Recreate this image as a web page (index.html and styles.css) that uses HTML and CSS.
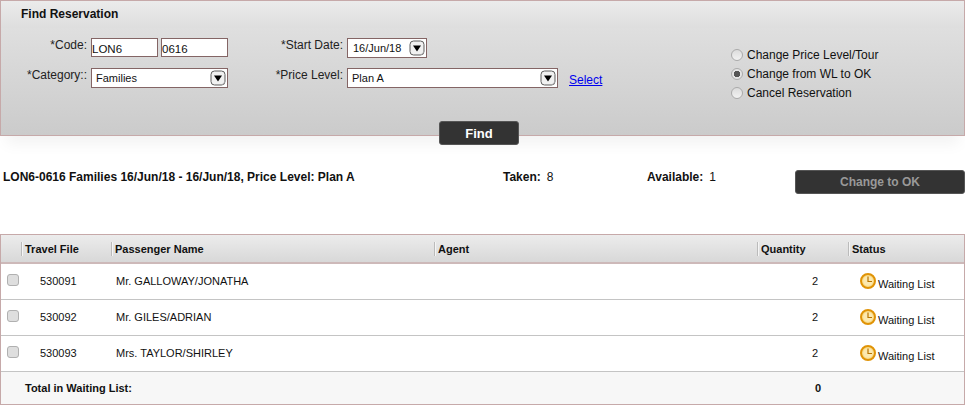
FILE: index.html
```html
<!DOCTYPE html>
<html lang="en">
<head>
<meta charset="utf-8">
<title>Find Reservation</title>
<link rel="stylesheet" href="styles.css">
</head>
<body>
<svg class="defs" width="0" height="0" aria-hidden="true">
  <symbol id="arrow" viewBox="0 0 16 16">
    <rect x="1" y="1" width="14" height="14" rx="3.5" fill="#f1f1f1" stroke="#5e5e5e"/>
    <path d="M14.5 5v7a2.500 2.500 0 0 1-2.500 2.500H5" fill="none" stroke="#a5a5a5"/>
    <path d="M4 5.500h8L8 11.500z" fill="#000"/>
  </symbol>
  <symbol id="clock" viewBox="0 0 16 16">
    <circle cx="8" cy="8" r="7" fill="#f9dc8a" stroke="#e09306" stroke-width="2"/>
    <circle cx="8" cy="8" r="4.800" fill="#fce9b0"/>
    <path d="M8 3.500V8.500H12" fill="none" stroke="#b87400" stroke-width="1.200"/>
  </symbol>
</svg>
<form class="panel">
  <h1 class="panel-title">Find Reservation</h1>
  <div class="panel-body">
    <div class="fields">
      <label class="lbl">*Code:</label>
      <div class="code-pair"><input class="inp" value="LON6"><input class="inp" value="0616"></div>
      <label class="lbl">*Start Date:</label>
      <div class="sel sel-date"><select><option>16/Jun/18</option></select><svg><use href="#arrow"/></svg></div>
      <span></span>
      <label class="lbl">*Category::</label>
      <div class="sel sel-cat"><select><option>Families</option></select><svg><use href="#arrow"/></svg></div>
      <label class="lbl">*Price Level:</label>
      <div class="sel sel-price"><select><option>Plan A</option></select><svg><use href="#arrow"/></svg></div>
      <a class="select-link" href="#">Select</a>
    </div>
    <div class="radios">
      <label class="radio"><input type="radio" name="action">Change Price Level/Tour</label>
      <label class="radio"><input type="radio" name="action" checked>Change from WL to OK</label>
      <label class="radio"><input type="radio" name="action">Cancel Reservation</label>
    </div>
  </div>
  <div class="panel-foot"><button type="button" class="btn btn-find">Find</button></div>
</form>
<section class="summary">
  <strong class="sum-title">LON6-0616 Families 16/Jun/18 - 16/Jun/18, Price Level: Plan A</strong>
  <span class="sum-taken"><b>Taken:</b>8</span>
  <span class="sum-avail"><b>Available:</b>1</span>
  <button type="button" class="btn btn-ok">Change to OK</button>
</section>
<table class="grid">
  <colgroup><col class="c1"><col class="c2"><col class="c3"><col class="c4"><col class="c5"><col class="c6"></colgroup>
  <thead>
    <tr><th></th><th><span>Travel File</span></th><th><span>Passenger Name</span></th><th><span>Agent</span></th><th><span>Quantity</span></th><th><span>Status</span></th></tr>
  </thead>
  <tbody>
    <tr><td class="chk"><input type="checkbox"></td><td class="file">530091</td><td class="name">Mr. GALLOWAY/JONATHA</td><td></td><td class="qty">2</td><td class="status"><svg><use href="#clock"/></svg><span>Waiting List</span></td></tr>
    <tr><td class="chk"><input type="checkbox"></td><td class="file">530092</td><td class="name">Mr. GILES/ADRIAN</td><td></td><td class="qty">2</td><td class="status"><svg><use href="#clock"/></svg><span>Waiting List</span></td></tr>
    <tr><td class="chk"><input type="checkbox"></td><td class="file">530093</td><td class="name">Mrs. TAYLOR/SHIRLEY</td><td></td><td class="qty">2</td><td class="status"><svg><use href="#clock"/></svg><span>Waiting List</span></td></tr>
  </tbody>
  <tfoot>
    <tr><td></td><td colspan="3" class="total-label">Total in Waiting List:</td><td class="qty total">0</td><td></td></tr>
  </tfoot>
</table>
</body>
</html>
```

FILE: styles.css
```css
* { box-sizing: border-box; }
html, body { margin: 0; padding: 0; }
body { width: 965px; height: 405px; overflow: hidden; background: #fff; font: 12px "Liberation Sans", Arial, sans-serif; color: #111; }
.defs { display: block; height: 0; }

.panel { height: 136px; border: 1px solid #c6a9a9; background: linear-gradient(#e4e4e4, #cbcbcb); box-shadow: 0 14px 14px -6px rgba(0,0,0,.05); display: flex; flex-direction: column; }
.panel-title { margin: 0; height: 27px; padding: 6px 0 0 20px; font-size: 12px; line-height: 14px; font-weight: bold; color: #111; background: linear-gradient(#ebebeb, #dedede); }
.panel-body { flex: 1; display: flex; justify-content: space-between; }
.fields { display: grid; grid-template-columns: 86px 137px 111px auto auto; grid-template-rows: 20px 20px; column-gap: 4px; row-gap: 10px; padding-top: 10px; align-items: start; align-content: start; }
.lbl { font-size: 12px; line-height: 14px; color: #222; text-align: right; }
.code-pair { display: flex; gap: 3px; }
.inp { width: 67px; height: 19px; border: 1px solid #846565; background: #fff; padding: 3px 0 0 0; font: 11.500px "Liberation Sans", Arial, sans-serif; color: #111; border-radius: 0; outline: 0; }
.sel { display: grid; align-items: center; height: 20px; border: 1px solid #846565; background: #fff; }
.sel select, .sel svg { grid-area: 1 / 1; }
.sel select { appearance: none; border: 0; background: transparent; font: 11px "Liberation Sans", Arial, sans-serif; color: #111; padding: 0 0 0 4px; width: 100%; height: 18px; outline: 0; }
.sel svg { width: 16px; height: 16px; justify-self: end; margin-right: 1px; }
.sel-cat { width: 137px; }
.sel-date { width: 80px; }
.sel-date select { padding-left: 5px; }
.sel-price { width: 211px; }
.select-link { color: #00e; font-size: 12px; line-height: 14px; margin: 5px 0 0 7px; text-decoration: underline; }
.radios { display: flex; flex-direction: column; gap: 5px; padding-top: 20px; width: 233px; }
.radio { display: flex; align-items: center; gap: 4px; height: 14px; line-height: 14px; color: #111; white-space: nowrap; }
.radio input { appearance: none; width: 12px; height: 12px; margin: 0; border-radius: 50%; border: 1px solid #aaa; background: linear-gradient(#dcdcdc, #f2f2f2); }
.radio input:checked { background: radial-gradient(circle, #555 0 3px, #e4e4e4 3.500px); }

.panel-foot { display: flex; justify-content: center; height: 0; padding-right: 7px; }
.btn { border: 1px solid #555; border-radius: 3px; background: #333; font: bold 12px "Liberation Sans", Arial, sans-serif; padding: 0; }
.btn-find { width: 80px; height: 24px; margin-top: -14px; color: #fff; font-size: 13px; flex: none; }

.summary { height: 98px; padding-left: 3px; display: flex; align-items: flex-start; }
.sum-title, .sum-taken, .sum-avail { margin-top: 34px; line-height: 14px; color: #111; }
.sum-title { width: 500px; font-weight: bold; }
.sum-taken { width: 144px; }
.sum-avail { width: 148px; }
.sum-taken b, .sum-avail b { margin-right: 6px; }
.btn-ok { width: 170px; height: 24px; margin-top: 34px; color: #999; }

.grid { width: 965px; height: 171px; table-layout: fixed; border-collapse: separate; border-spacing: 0; border: 1px solid #c6a9a9; }
.c1 { width: 20px; } .c2 { width: 90px; } .c3 { width: 323px; } .c4 { width: 323px; } .c5 { width: 91px; }
.grid th { height: 29px; padding: 0; text-align: left; font-weight: bold; font-size: 11px; color: #111; background: linear-gradient(#ececec, #d8d8d8); border-bottom: 2px solid #cdb9b9; }
.grid th span { display: block; height: 14px; line-height: 14px; padding-left: 3px; border-left: 1px solid #bbb; box-shadow: inset 1px 0 0 #f5f5f5; }
.grid td { padding: 0 0 2px; height: 36px; border-bottom: 1px solid #c4c4c4; font-size: 11px; color: #111; }
.chk input { appearance: none; display: block; width: 12px; height: 12px; margin: 0 0 1px 6px; border: 1px solid #b0b0b0; border-radius: 3px; background: #dedede; }
.file { padding-left: 19px !important; }
.name { padding-left: 5px !important; }
.qty { text-align: right; padding-right: 30px !important; }
.status { display: flex; align-items: flex-start; height: 36px; padding: 9px 0 0 12px !important; }
.status svg { width: 16px; height: 16px; flex: none; }
.status span { margin: 4px 0 0 2px; line-height: 14px; }
.grid tfoot td { height: 32px; padding-bottom: 0; border-bottom: 0; background: #f7f7f7; font-weight: bold; }
.grid tfoot .total-label { padding-left: 4px; }
.total { padding-right: 27px !important; }
```
